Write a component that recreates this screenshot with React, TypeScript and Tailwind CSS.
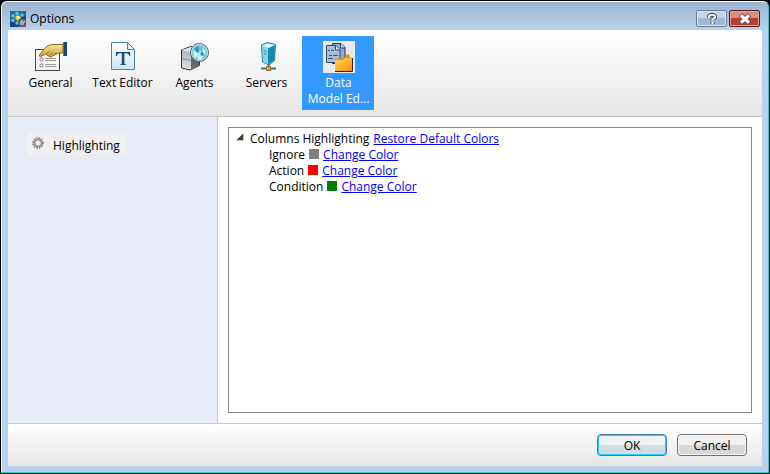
import { useState, type ReactNode } from "react";

function AppIcon() {
  return (
    <svg className="size-4" viewBox="0 0 16 16" aria-hidden="true">
      <rect width="16" height="16" fill="#17477c" />
      <path d="M0 0h16v5L0 11z" fill="#2868a0" />
      <g fill="#48c8d0">
        <circle cx="7" cy="2.500" r="1.800" />
        <circle cx="3" cy="5" r="1.800" />
        <circle cx="12" cy="4" r="1.800" />
        <circle cx="3" cy="9.500" r="1.800" />
        <circle cx="7" cy="12" r="1.800" />
      </g>
      <circle cx="8" cy="7" r="2.800" fill="#d9b238" />
      <circle cx="8" cy="6.500" r="1.400" fill="#fff0a0" />
      <path d="M9 8h7v8H9z" fill="#5b5f63" />
      <path d="M11 10v4M11 10h2M13 14v-3h1.500v-1" stroke="#e4e4e4" fill="none" />
    </svg>
  );
}

function GeneralIcon() {
  return (
    <svg className="size-8" viewBox="0 0 32 32" aria-hidden="true">
      <defs>
        <linearGradient id="hand" x1="0" y1="0" x2="0" y2="1">
          <stop offset="0" stopColor="#f8e59c" />
          <stop offset="1" stopColor="#c99b35" />
        </linearGradient>
      </defs>
      <rect x=".5" y="8.500" width="24" height="21" fill="#f5f5f4" stroke="#474747" />
      <circle cx="6.500" cy="18.500" r="1.600" fill="#fff" stroke="#777" />
      <circle cx="6.500" cy="24.500" r="1.600" fill="#fff" stroke="#777" />
      <path d="M10 17.500h11M10 19.500h11M10 23.500h11M10 25.500h11" stroke="#9c9c9c" />
      <path
        d="M28 3.500H16.500l-5 2-4 4.500-3 4c-.7 1.500.8 2 2 1l5-2.500c0 1.500 1 2.500 2.500 2.500 1 1.500 2.500 1 3.500 0l3-1.500 3-1.500h4.500z"
        fill="url(#hand)"
        stroke="#8b6822"
      />
      <path d="m12 12 2.500-1.500M14.500 14.500l3-3m.5 3.500 3-3" stroke="#94702a" fill="none" />
      <path d="M28 1h4v14h-4z" fill="#154879" />
      <path d="M28 1h1v14h-1z" fill="#3c78ae" />
    </svg>
  );
}

function TextIcon() {
  return (
    <svg className="size-8" viewBox="0 0 32 32" aria-hidden="true">
      <defs>
        <linearGradient id="page" x1="0" y1="0" x2="0" y2="1">
          <stop offset="0" stopColor="#fff" />
          <stop offset="1" stopColor="#cde5f2" />
        </linearGradient>
      </defs>
      <path d="M4.500 1.500h16l7 7v20h-23z" fill="url(#page)" stroke="#4785a9" />
      <path d="M20.500 1.500v7h7z" fill="#e5f3f9" stroke="#4785a9" />
      <path d="M9 11h14l.4 4h-1c-.5-2-1.200-2.800-3-2.800h-2v9.500c0 1.500.6 1.800 2.200 2V24h-7v-.3c1.600-.2 2.200-.5 2.200-2v-9.500h-2c-1.800 0-2.500.8-3 2.800h-1z" fill="#164b7e" />
    </svg>
  );
}

function AgentsIcon() {
  return (
    <svg className="size-8" viewBox="0 0 32 32" aria-hidden="true">
      <defs>
        <radialGradient id="globe" cx=".5" cy=".6" r=".6">
          <stop offset="0" stopColor="#d2f6fc" />
          <stop offset=".5" stopColor="#55bfdc" />
          <stop offset="1" stopColor="#8fd0e8" />
        </radialGradient>
        <linearGradient id="box" x1="0" y1="0" x2="0" y2="1">
          <stop offset="0" stopColor="#a9acb0" />
          <stop offset="1" stopColor="#e0e1e3" />
        </linearGradient>
      </defs>
      <path d="m2.500 9 9-3.500 9 2v17l-9.500 4.500-8.500-2z" fill="url(#box)" stroke="#333" />
      <path d="M12 12v16.500l8-4V10z" fill="#66696e" />
      <path d="m3 9 9 2 8-4-8-1z" fill="#e4e5e7" />
      <path d="m3 17 9 2v1L3 18z" fill="#688fc0" />
      <circle cx="20.500" cy="11.500" r="9" fill="url(#globe)" stroke="#565c60" />
      <circle cx="20.500" cy="11.500" r="8" fill="none" stroke="#c5dfe8" />
      <path d="m14 9 2 1 3 3-2 4-2-1zm4 7 3-2 4 1-2 3-4 1zM24 7l3 3-1 4-3-2z" fill="#d9fbf6" opacity=".85" />
      <path d="m16 7 3-2 1 5-1 2-2-2zm7 3 2 3-1 2-3-1z" fill="#2899bd" />
    </svg>
  );
}

function ServersIcon() {
  return (
    <svg className="size-8" viewBox="0 0 32 32" aria-hidden="true">
      <path d="m10.500 4 6-2.500 8 2-1 16-5.500 4.500-6.500-3z" fill="#5bbfdb" stroke="#267f9c" />
      <path d="m11 5 6 2.500v16l-5-2.500z" fill="#8bd3e8" />
      <path d="M17 7.500 24 4l-1 15.500-6 4z" fill="#1589aa" />
      <path d="m11 4.500 5.500-2L24 4l-7 3z" fill="#d7f7fc" />
      <path d="m12.500 9 3 1.500m-3 1.500 3 1.500" stroke="#308ca8" />
      <path d="M17.500 23v3M10 27.500h15" stroke="#287c97" strokeWidth="2" />
      <path d="M15.500 25.500h4v4h-4z" fill="#efa33d" stroke="#9b6538" />
    </svg>
  );
}

function DataModelIcon() {
  return (
    <svg className="size-8" viewBox="0 0 32 32" aria-hidden="true">
      <defs>
        <linearGradient id="folder" x1="0" y1="0" x2="1" y2="1">
          <stop offset="0" stopColor="#ffd66c" />
          <stop offset=".5" stopColor="#fdb52c" />
          <stop offset="1" stopColor="#eb9000" />
        </linearGradient>
      </defs>
      <rect width="32" height="32" fill="#e7ebee" />
      <path d="M9.500 2.500H18l4 4v16H9.500z" fill="#8faed3" stroke="#253650" />
      <path d="M17.500 2.500V7H22" fill="#d8e5f4" stroke="#253650" />
      <path d="M3.500 4.500H13l4 4v13H3.500z" fill="#a7bfdf" stroke="#354966" />
      <path d="M12.500 4.500V9H17" fill="#dce8f5" stroke="#354966" />
      <path d="M5 9.500h2m1 0h3M6 14.500h3m1 0h5M5 17.500h5" stroke="#45546a" />
      <path d="M12 17.500h9l2-4h3l1 3h2v14H12z" fill="#e89408" />
      <path d="M12 19h8l2-2h7v13H12z" fill="url(#folder)" />
      <path d="M12 30.500h17.500V17" stroke="#28231c" fill="none" />
    </svg>
  );
}

type Category = { lines: string[]; icon: ReactNode };

const categories: Category[] = [
  { lines: ["General"], icon: <GeneralIcon /> },
  { lines: ["Text Editor"], icon: <TextIcon /> },
  { lines: ["Agents"], icon: <AgentsIcon /> },
  { lines: ["Servers"], icon: <ServersIcon /> },
  { lines: ["Data", "Model Ed..."], icon: <DataModelIcon /> },
];

const colors = [
  { label: "Ignore", swatch: "bg-[#808080]" },
  { label: "Action", swatch: "bg-[#ff0000]" },
  { label: "Condition", swatch: "bg-[#008000]" },
];

function TitleBar() {
  return (
    <header className="flex h-7 shrink-0 items-start justify-between px-0.5">
      <div className="flex items-center gap-1 pt-2">
        <AppIcon />
        <h1 className="pt-px leading-4">Options</h1>
      </div>
      <div className="flex gap-0.5 pt-2">
        <button
          aria-label="Help"
          className="flex h-[17px] w-[31px] items-center justify-center rounded-xs border border-[#6b7d96] bg-linear-to-b from-[#c1d3e7] from-50% to-[#9db8d3] to-50% shadow-[inset_0_0_0_1px_#d7e4f2]"
        >
          <svg className="h-3 w-3" viewBox="0 0 12 12" fill="none">
            <path d="M3 4.500V3l1.500-1h3L9 3v1.500L6.500 6.500V8M6.500 9v2" stroke="#4b5664" strokeWidth="4" />
            <path d="M3 4.500V3l1.500-1h3L9 3v1.500L6.500 6.500V8M6.500 9v2" stroke="#fff" strokeWidth="2" />
          </svg>
        </button>
        <button
          aria-label="Close"
          className="flex h-[17px] w-[31px] items-center justify-center rounded-xs border border-[#541c24] bg-linear-to-b from-[#d98b80] from-50% to-[#bd3d28] to-50% shadow-[inset_0_0_0_1px_#e5a69c]"
        >
          <svg className="h-3 w-3" viewBox="0 0 12 12" fill="none">
            <path d="m1.500 2 9 8m0-8-9 8" stroke="#51525d" strokeWidth="5" />
            <path d="m2 2.500 8 7m0-7-8 7" stroke="#fff" strokeWidth="3" />
          </svg>
        </button>
      </div>
    </header>
  );
}

export default function App() {
  const [active, setActive] = useState(4);
  const [expanded, setExpanded] = useState(true);

  return (
    <div className="flex min-h-screen flex-col border border-black bg-black font-['Open_Sans','Noto_Sans',sans-serif] text-xs text-black">
      <div className="flex flex-1 flex-col rounded-t-md border border-t-white border-r-[#25c8ee] border-b-[#25c8ee] border-l-[#e4f2fc] bg-[#b9d1ea] bg-linear-to-b from-[#99b4d1] to-[#b9d1ea] to-[28px] px-1.5 pb-1.5">
        <TitleBar />

        <div className="flex flex-1 flex-col bg-white">
          <nav className="flex border-b border-[#c8c8c8] bg-linear-to-b from-white to-[#e6e6e6] p-1.5">
            {categories.map((category, i) => (
              <button
                key={category.lines[0]}
                onClick={() => setActive(i)}
                className={`flex h-[74px] w-[72px] flex-col items-center gap-0.5 pt-[5px] pl-px leading-4 ${i === active ? "bg-[#3399ff] text-white" : ""}`}
              >
                {category.icon}
                <span>
                  {category.lines.map((line) => (
                    <span key={line} className="block whitespace-nowrap">
                      {line}
                    </span>
                  ))}
                </span>
              </button>
            ))}
          </nav>

          <div className="flex flex-1">
            <aside className="w-[210px] shrink-0 border-r border-[#c8c8c8] bg-[#e6ebf5] pt-4 pl-[19px]">
              <button className="flex h-[22px] items-center gap-1.5 bg-[#f0f0f0] pr-1.5 pl-1">
                <svg className="size-4" viewBox="0 0 16 16" fill="none" aria-hidden="true">
                  <circle cx="7" cy="7" r="5" stroke="#8b8b8b" strokeWidth="2" strokeDasharray="1.500 1.120" />
                  <circle cx="7" cy="7" r="3.500" stroke="#909090" strokeWidth="2" />
                  <circle cx="7" cy="7" r="2.500" fill="#e9e9e9" />
                </svg>
                <span className="pt-1">Highlighting</span>
              </button>
            </aside>

            <main className="flex flex-1 p-2.5">
              <div className="flex-1 border border-[#828790] pt-[3px] pl-[5px] leading-4">
                <div className="flex items-center gap-1">
                  <button
                    aria-label="Columns Highlighting"
                    aria-expanded={expanded}
                    onClick={() => setExpanded(!expanded)}
                    className="size-3"
                  >
                    <svg className={expanded ? "size-3" : "size-3 -rotate-45"} viewBox="0 0 12 12">
                      <path d="M9 1v6H3z" fill="#404040" stroke="#222" strokeWidth=".5" />
                    </svg>
                  </button>
                  <span>Columns Highlighting</span>
                  <a href="#restore" className="text-[#0000ff] underline">
                    Restore Default Colors
                  </a>
                </div>
                {expanded && (
                  <ul className="pl-[35px]">
                    {colors.map((color) => (
                      <li key={color.label} className="flex items-center gap-1">
                        <span>{color.label}</span>
                        <span className={`mb-0.5 size-2.5 ${color.swatch}`} />
                        <a href={`#${color.label.toLowerCase()}`} className="text-[#0000ff] underline">
                          Change Color
                        </a>
                      </li>
                    ))}
                  </ul>
                )}
              </div>
            </main>
          </div>

          <footer className="flex h-[43px] shrink-0 items-center justify-end gap-2.5 border-t border-[#c8c8c8] bg-linear-to-b from-white to-[#e6e6e6] px-[15px]">
            <button className="h-[22px] w-[70px] rounded-sm border border-[#3c7fb1] bg-linear-to-b from-[#edf2f5] from-50% to-[#d3dde5] to-50% pt-0.5 leading-4 shadow-[inset_0_0_0_1px_#25cff5]">
              OK
            </button>
            <button className="h-[22px] w-[70px] rounded-sm border border-[#707070] bg-linear-to-b from-[#efefef] from-50% to-[#d8d8d8] to-50% pt-0.5 leading-4 shadow-[inset_0_0_0_1px_#f8f8f8]">
              Cancel
            </button>
          </footer>
        </div>
      </div>
    </div>
  );
}
